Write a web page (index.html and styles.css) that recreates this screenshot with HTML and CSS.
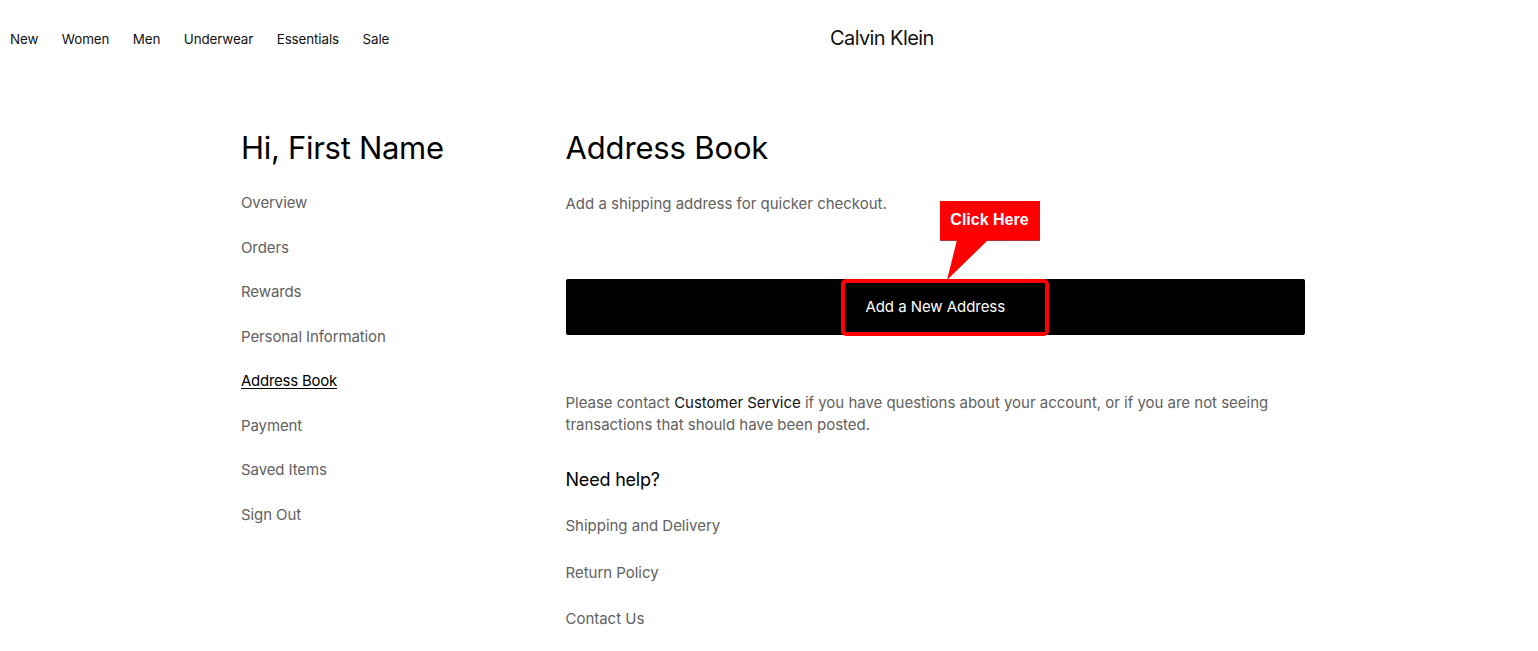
FILE: index.html
```html
<!DOCTYPE html>
<html lang="en">
<head>
<meta charset="utf-8">
<title>Address Book</title>
<link rel="stylesheet" href="styles.css">
</head>
<body>
<header class="header">
  <nav class="nav">
    <a href="#">New</a><a href="#">Women</a><a href="#">Men</a><a href="#">Underwear</a><a href="#">Essentials</a><a href="#">Sale</a>
  </nav>
  <div class="logo">Calvin Klein</div>
</header>
<main class="layout">
  <aside class="side">
    <h1 class="title">Hi, First Name</h1>
    <ul class="menu">
      <li><a href="#">Overview</a></li>
      <li><a href="#">Orders</a></li>
      <li><a href="#">Rewards</a></li>
      <li><a href="#">Personal Information</a></li>
      <li><a href="#" class="active">Address Book</a></li>
      <li><a href="#">Payment</a></li>
      <li><a href="#">Saved Items</a></li>
      <li><a href="#">Sign Out</a></li>
    </ul>
  </aside>
  <section class="content">
    <h2 class="title title-main">Address Book</h2>
    <p class="lead">Add a shipping address for quicker checkout.</p>
    <div class="action">
      <button class="add" type="button">Add a New Address</button>
      <span class="highlight"></span>
      <div class="callout">
        <span class="callout-label">Click Here</span>
        <svg class="callout-tail" width="41" height="40" viewBox="0 0 41 40"><path d="M10 0 L0 40 L41 0 Z" fill="#f00"/></svg>
      </div>
    </div>
    <p class="note">Please contact <a href="#">Customer Service</a> if you have questions about your account, or if you are not seeing transactions that should have been posted.</p>
    <h3 class="help">Need help?</h3>
    <ul class="links">
      <li><a href="#">Shipping and Delivery</a></li>
      <li><a href="#">Return Policy</a></li>
      <li><a href="#">Contact Us</a></li>
    </ul>
  </section>
</main>
</body>
</html>
```
FILE: styles.css
```css
* { box-sizing: border-box; }
html, body { margin: 0; padding: 0; height: 651px; overflow: hidden; }
body { background: #fff; color: #000; font-family: "Inter", "Liberation Sans", sans-serif; }
a { color: inherit; text-decoration: none; }
ul { list-style: none; margin: 0; padding: 0; }

.header { position: relative; display: flex; align-items: center; height: 78px; padding-left: 10px; }
.nav { display: flex; gap: 23.5px; font-size: 13.4px; line-height: 20px; color: #111; letter-spacing: -0.1px; }
.logo { position: absolute; left: 830px; top: 23px; font-size: 20px; line-height: 30px; letter-spacing: -0.6px; color: #111; }

.layout { display: flex; padding-left: 241px; }
.side { width: 324.5px; flex: none; }
.content { width: 739.5px; flex: none; position: relative; }

.title { margin: 48px 0 0; font-size: 31px; line-height: 44px; font-weight: 400; letter-spacing: -0.3px; }
.title-main { letter-spacing: -0.15px; }

.menu { margin-top: 23px; color: #616161; font-size: 15px; line-height: 20px; letter-spacing: -0.1px; }
.menu li { height: 44.5px; display: flex; align-items: flex-start; }
.menu .active { color: #000; text-decoration: underline; text-underline-offset: 2px; letter-spacing: -0.25px; }

.lead { margin: 24px 0 0; font-size: 15px; line-height: 20px; color: #616161; letter-spacing: -0.01px; }

.action { position: relative; margin-top: 65px; }
.add { display: block; width: 100%; height: 56px; background: #000; color: #fff; border: 0; border-radius: 2px; font: inherit; font-size: 15px; letter-spacing: -0.05px; padding: 0 0 2px; }
.highlight { position: absolute; left: 275px; top: 0; width: 208px; height: 57px; border: 4px solid #f00; border-radius: 5px; }
.callout { position: absolute; left: 374px; top: -78px; width: 100px; }
.callout-label { display: block; height: 39px; background: #f00; color: #fff; font-family: "Liberation Sans", sans-serif; font-weight: 700; font-size: 16px; line-height: 38px; text-align: center; box-shadow: 0 1px 0 #a33; }
.callout-tail { display: block; margin-left: 7px; }

.note { margin: 57px 0 0; font-size: 15px; line-height: 22px; color: #616161; letter-spacing: -0.02px; }
.note a { color: #111; }

.help { margin: 31px 0 0; font-size: 18px; line-height: 26px; font-weight: 400; color: #000; letter-spacing: -0.2px; }

.links { margin-top: 23px; font-size: 15px; line-height: 20px; color: #616161; letter-spacing: -0.02px; }
.links li { height: 46.5px; }
```
